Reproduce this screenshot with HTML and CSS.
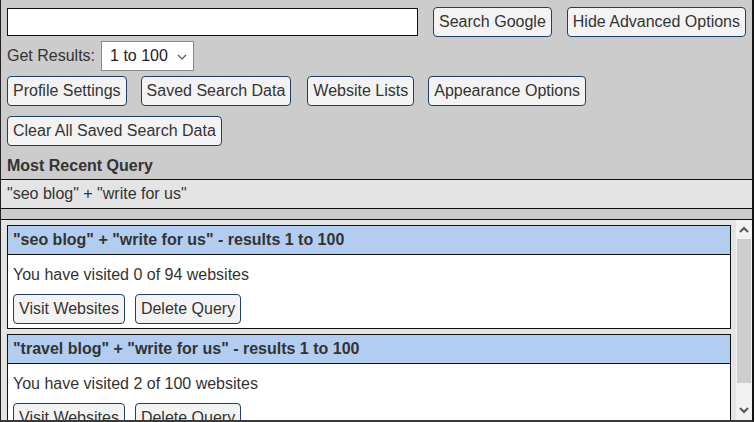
FILE: index.html
```html
<!DOCTYPE html>
<html>
<head>
<meta charset="utf-8">
<link rel="stylesheet" href="styles.css">
</head>
<body>
<div class="app">
  <div class="top">
    <div class="row row-search">
      <input class="query" type="text">
      <button class="btn">Search Google</button>
      <button class="btn">Hide Advanced Options</button>
    </div>
    <div class="row row-results">
      <span class="label">Get Results:</span>
      <div class="select"><span>1 to 100</span><svg class="chev" width="10" height="6" viewBox="0 0 10 6"><path d="M1 1 L5 5 L9 1" fill="none" stroke="#555" stroke-width="1.2"/></svg></div>
    </div>
    <div class="row row-buttons">
      <button class="btn">Profile Settings</button>
      <button class="btn">Saved Search Data</button>
      <button class="btn">Website Lists</button>
      <button class="btn">Appearance Options</button>
    </div>
    <div class="row row-clear">
      <button class="btn">Clear All Saved Search Data</button>
    </div>
    <div class="recent-title">Most Recent Query</div>
  </div>
  <div class="recent">"seo blog" + "write for us"</div>
  <div class="spacer"></div>
  <div class="list-wrap">
    <div class="list">
      <div class="card">
        <div class="card-head">"seo blog" + "write for us" - results 1 to 100</div>
        <div class="card-body">
          <div class="visited">You have visited 0 of 94 websites</div>
          <div class="card-actions">
            <button class="btn">Visit Websites</button>
            <button class="btn">Delete Query</button>
          </div>
        </div>
      </div>
      <div class="card">
        <div class="card-head">"travel blog" + "write for us" - results 1 to 100</div>
        <div class="card-body">
          <div class="visited">You have visited 2 of 100 websites</div>
          <div class="card-actions">
            <button class="btn">Visit Websites</button>
            <button class="btn">Delete Query</button>
          </div>
        </div>
      </div>
    </div>
    <div class="scrollbar">
      <svg class="arrow" width="10" height="7" viewBox="0 0 10 7"><path d="M1 6 L5 2 L9 6" fill="none" stroke="#555" stroke-width="2"/></svg>
      <div class="track"><div class="thumb"></div></div>
      <svg class="arrow" width="10" height="7" viewBox="0 0 10 7"><path d="M1 1 L5 5 L9 1" fill="none" stroke="#555" stroke-width="2"/></svg>
    </div>
  </div>
</div>
</body>
</html>
```
FILE: styles.css
```css
html, body {
  margin: 0;
  padding: 0;
  height: 100%;
  background: #ffffff;
}
body {
  font-family: "Liberation Sans", Arial, sans-serif;
  font-size: 16px;
  color: #333333;
  overflow: hidden;
}
.app {
  width: 751px;
  height: 420px;
  background: #cccccc;
  border-left: 1px solid #222;
  border-right: 2px solid #111;
  border-bottom: 2px solid #3a3a3a;
  display: flex;
  flex-direction: column;
}
.top {
  padding: 7px 6px 0 6px;
}
.row {
  display: flex;
  align-items: center;
}
.row-search {
  height: 29px;
}
.query {
  width: 412px;
  height: 28px;
  box-sizing: border-box;
  border: 1px solid #111;
  margin: 0 15px 0 0;
  padding: 0;
  background: #fff;
}
.btn {
  font-family: "Liberation Sans", Arial, sans-serif;
  font-size: 16px;
  color: #333;
  background: #f3f3f3;
  border: 1px solid #1f3f66;
  border-radius: 4px;
  padding: 0 5px;
  height: 30px;
  line-height: 28px;
  margin: 0;
  white-space: nowrap;
}
.row-search .btn + .btn { margin-left: 15px; }
.row-results {
  margin-top: 5px;
  height: 30px;
}
.label {
  margin-right: 6px;
}
.select {
  width: 93px;
  height: 30px;
  box-sizing: border-box;
  border: 1px solid #8a8a8a;
  background: #fff;
  display: flex;
  align-items: center;
  justify-content: space-between;
  padding: 0 6px 0 8px;
  color: #222;
}
.chev { margin-top: 1px; }
.row-buttons {
  margin-top: 5px;
  gap: 14px;
}
.row-buttons .btn:nth-child(3) { margin-left: 2px; }
.row-clear {
  margin-top: 10px;
}
.recent-title {
  font-weight: bold;
  margin-top: 10px;
  height: 20px;
  line-height: 20px;
  padding-bottom: 3px;
}
.recent {
  background: #e4e4e4;
  border-top: 1px solid #111;
  border-bottom: 1px solid #111;
  height: 28px;
  line-height: 28px;
  padding-left: 6px;
}
.spacer {
  height: 10px;
  border-bottom: 1px solid #111;
}
.list-wrap {
  flex: 1;
  display: flex;
  background: #e4e4e4;
  overflow: hidden;
  min-height: 0;
}
.list {
  flex: 1;
  padding: 5px 5px 0 6px;
  overflow: hidden;
}
.card {
  border: 1px solid #111;
  background: #fff;
  margin-bottom: 5px;
}
.card-head {
  background: #b3cdf0;
  font-weight: bold;
  border-bottom: 1px solid #111;
  height: 28px;
  line-height: 28px;
  padding-left: 5px;
}
.card-body {
  padding: 10px 5px 4px 5px;
}
.visited {
  line-height: 20px;
  height: 20px;
}
.card-actions {
  display: flex;
  gap: 10px;
  margin-top: 9px;
}
.scrollbar {
  width: 16px;
  margin-right: 0;
  background: #f1f1f1;
  display: flex;
  flex-direction: column;
  align-items: center;
}
.arrow {
  margin: 6px 0;
  flex: none;
}
.track {
  flex: 1;
  width: 100%;
  display: flex;
  flex-direction: column;
}
.thumb {
  margin: 0 1px;
  height: 144px;
  background: #cdcdcd;
}
```
